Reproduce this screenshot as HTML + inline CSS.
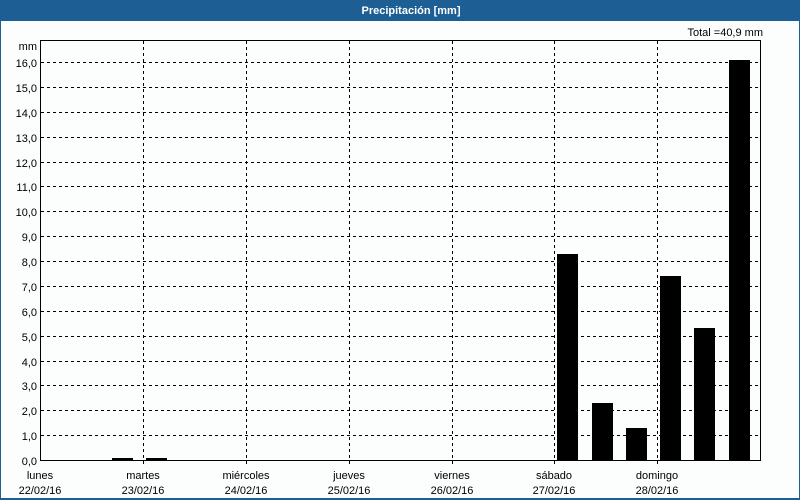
<!DOCTYPE html>
<html><head><meta charset="utf-8"><style>
html,body{margin:0;padding:0;background:#fff;}
svg{display:block}
text{font-family:"Liberation Sans","DejaVu Sans",sans-serif;font-size:11px;fill:#000}
</style></head><body>
<svg width="800" height="500" viewBox="0 0 800 500" xmlns="http://www.w3.org/2000/svg">
<rect x="0" y="0" width="800" height="500" fill="#1d5e94"/>
<rect x="1" y="21" width="798" height="477" fill="#fcfdfd"/>
<text x="411" y="14" text-anchor="middle" style="font-weight:bold;fill:#fff">Precipitación [mm]</text>
<text x="763" y="36" text-anchor="end">Total =40,9 mm</text>
<g stroke="#000" stroke-width="1" stroke-dasharray="3,3" shape-rendering="crispEdges">
<line x1="41" x2="760" y1="62.5" y2="62.5"/><line x1="41" x2="760" y1="87.5" y2="87.5"/>
<line x1="41" x2="760" y1="112.5" y2="112.5"/><line x1="41" x2="760" y1="137.5" y2="137.5"/>
<line x1="41" x2="760" y1="162.5" y2="162.5"/><line x1="41" x2="760" y1="186.5" y2="186.5"/>
<line x1="41" x2="760" y1="211.5" y2="211.5"/><line x1="41" x2="760" y1="236.5" y2="236.5"/>
<line x1="41" x2="760" y1="261.5" y2="261.5"/><line x1="41" x2="760" y1="286.5" y2="286.5"/>
<line x1="41" x2="760" y1="311.5" y2="311.5"/><line x1="41" x2="760" y1="336.5" y2="336.5"/>
<line x1="41" x2="760" y1="361.5" y2="361.5"/><line x1="41" x2="760" y1="385.5" y2="385.5"/>
<line x1="41" x2="760" y1="410.5" y2="410.5"/><line x1="41" x2="760" y1="435.5" y2="435.5"/>
<line x1="143.5" x2="143.5" y1="41" y2="465"/><line x1="246.5" x2="246.5" y1="41" y2="465"/>
<line x1="349.5" x2="349.5" y1="41" y2="465"/><line x1="452.5" x2="452.5" y1="41" y2="465"/>
<line x1="554.5" x2="554.5" y1="41" y2="465"/><line x1="657.5" x2="657.5" y1="41" y2="465"/>
</g>
<g fill="#000" shape-rendering="crispEdges">
<rect x="112" y="458" width="21" height="2"/><rect x="146" y="458" width="21" height="2"/>
<rect x="557" y="254" width="21" height="206"/><rect x="592" y="403" width="21" height="57"/>
<rect x="626" y="428" width="21" height="32"/><rect x="660" y="276" width="21" height="184"/>
<rect x="694" y="328" width="21" height="132"/><rect x="729" y="60" width="21" height="400"/>
</g>
<rect x="40.5" y="40.5" width="720" height="420" fill="none" stroke="#000" stroke-width="1" shape-rendering="crispEdges"/>
<g text-anchor="end">
<text x="37" y="50">mm</text>
<text x="37" y="67">16,0</text><text x="37" y="92">15,0</text><text x="37" y="117">14,0</text>
<text x="37" y="142">13,0</text><text x="37" y="167">12,0</text><text x="37" y="191">11,0</text>
<text x="37" y="216">10,0</text><text x="37" y="241">9,0</text><text x="37" y="266">8,0</text>
<text x="37" y="291">7,0</text><text x="37" y="316">6,0</text><text x="37" y="341">5,0</text>
<text x="37" y="366">4,0</text><text x="37" y="390">3,0</text><text x="37" y="415">2,0</text>
<text x="37" y="440">1,0</text><text x="37" y="465">0,0</text>
</g>
<g text-anchor="middle">
<text x="40" y="479">lunes</text><text x="40" y="494">22/02/16</text>
<text x="143" y="479">martes</text><text x="143" y="494">23/02/16</text>
<text x="246" y="479">miércoles</text><text x="246" y="494">24/02/16</text>
<text x="349" y="479">jueves</text><text x="349" y="494">25/02/16</text>
<text x="452" y="479">viernes</text><text x="452" y="494">26/02/16</text>
<text x="554" y="479">sábado</text><text x="554" y="494">27/02/16</text>
<text x="657" y="479">domingo</text><text x="657" y="494">28/02/16</text>
</g>
</svg>
</body></html>
